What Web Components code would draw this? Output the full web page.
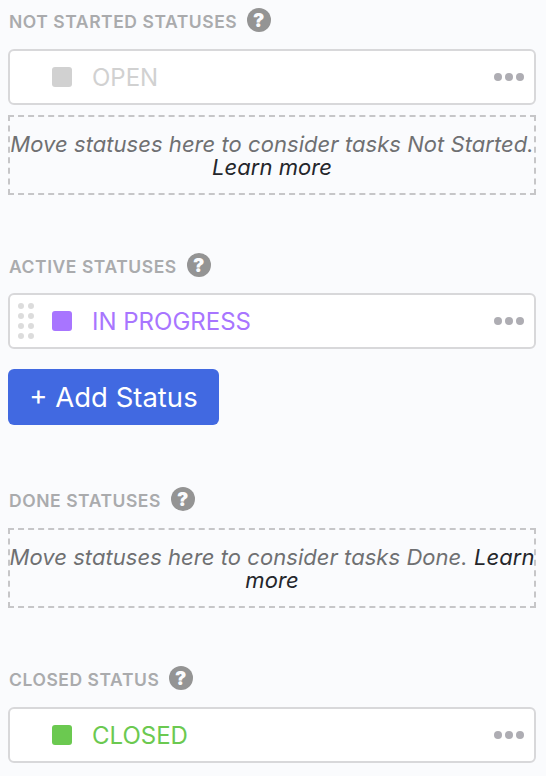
<!DOCTYPE html>
<html>
<head>
<meta charset="utf-8">
<style>
  html, body { margin: 0; height: 776px; overflow: hidden; background: #fafbfd; }
  body { font-family: Inter, "Liberation Sans", sans-serif; padding: 0 10px 0 8px; box-sizing: border-box; }
  status-group:nth-of-type(1) { margin-top: 8px; }
  status-group:nth-of-type(2) { margin-top: 58px; --head-gap: 16px; }
  status-group:nth-of-type(3) { margin-top: 62px; }
  status-group:nth-of-type(4) { margin-top: 58px; }
</style>
</head>
<body>
<template id="group-tpl">
  <style>
    :host { display: block; }
    .head { display: flex; align-items: center; gap: 10px; height: 24px; margin-bottom: var(--head-gap, 17px); padding-left: 1px;
      font-size: 17.5px; font-weight: 600; letter-spacing: 0.55px; color: #aaabad; }
    .title { padding-top: 2px; }
    svg { width: 24px; height: 24px; flex: none; }
    .body { display: flex; flex-direction: column; gap: 10px; }
  </style>
  <div class="head">
    <span class="title"></span>
    <svg viewBox="0 0 24 24"><circle cx="12" cy="12" r="12" fill="#949494"/><text x="12" y="18.5" text-anchor="middle" font-family="Inter, sans-serif" font-size="19" font-weight="900" fill="#fafbfd">?</text></svg>
  </div>
  <div class="body"><slot></slot></div>
</template>

<template id="row-tpl">
  <style>
    :host { display: flex; align-items: center; height: 56px; box-sizing: border-box; background: #fff;
      border: 2px solid #d8d8da; border-radius: 6px; padding-left: 8px; padding-right: 10px; }
    .grip { width: 16px; height: 38px; display: grid; grid-template-columns: 6px 6px; grid-auto-rows: 6px; gap: 4px; align-content: center; visibility: hidden; }
    :host([drag]) .grip { visibility: visible; }
    .grip i { background: #dcdcdc; border-radius: 50%; }
    .swatch { width: 20px; height: 20px; border-radius: 3px; margin-left: 18px; background: var(--c); flex: none; }
    .name { margin-left: 20px; padding-top: 1px; font-size: 24px; color: var(--c); flex: 1; }
    .more { display: flex; gap: 3px; }
    .more i { width: 8px; height: 8px; border-radius: 50%; background: #aeadb3; }
  </style>
  <div class="grip"><i></i><i></i><i></i><i></i><i></i><i></i><i></i><i></i></div>
  <div class="swatch"></div>
  <div class="name"><slot></slot></div>
  <div class="more"><i></i><i></i><i></i></div>
</template>

<template id="drop-tpl">
  <style>
    :host { display: block; height: 80px; box-sizing: border-box; border: 2px dashed #c6c6c8; padding-top: 16px;
      text-align: center; font-size: 22px; line-height: 23px; font-style: italic; color: #6f7072; letter-spacing: 0.05px; }
    .text { margin: 0 -3px; }
    ::slotted(a) { color: #24262b; }
  </style>
  <div class="text"><slot></slot></div>
</template>

<template id="btn-tpl">
  <style>
    :host { display: inline-flex; align-items: center; justify-content: center; align-self: flex-start; width: 211px; height: 56px; margin-top: 10px;
      background: #4169e1; color: #fff; border-radius: 6px; font-size: 27.5px; }
  </style>
  <slot></slot>
</template>

<status-group title-text="NOT STARTED STATUSES">
  <status-row color="#d1d1d1">OPEN</status-row>
  <drop-zone>Move statuses here to consider tasks Not Started. <a>Learn more</a></drop-zone>
</status-group>
<status-group title-text="ACTIVE STATUSES">
  <status-row color="#a875ff" drag>IN PROGRESS</status-row>
  <add-button>+ Add Status</add-button>
</status-group>
<status-group title-text="DONE STATUSES">
  <drop-zone>Move statuses here to consider tasks Done. <a>Learn more</a></drop-zone>
</status-group>
<status-group title-text="CLOSED STATUS">
  <status-row color="#6bc950">CLOSED</status-row>
</status-group>

<script>
function shadowFrom(el, id) {
  el.attachShadow({ mode: 'open' });
  el.shadowRoot.appendChild(document.getElementById(id).content.cloneNode(true));
}

class StatusGroup extends HTMLElement {
  constructor() { super(); shadowFrom(this, 'group-tpl'); }
  connectedCallback() {
    this.shadowRoot.querySelector('.title').textContent = this.getAttribute('title-text');
  }
}
class StatusRow extends HTMLElement {
  constructor() { super(); shadowFrom(this, 'row-tpl'); }
  connectedCallback() { this.style.setProperty('--c', this.getAttribute('color')); }
}
class DropZone extends HTMLElement {
  constructor() { super(); shadowFrom(this, 'drop-tpl'); }
}
class AddButton extends HTMLElement {
  constructor() { super(); shadowFrom(this, 'btn-tpl'); }
}
customElements.define('status-group', StatusGroup);
customElements.define('status-row', StatusRow);
customElements.define('drop-zone', DropZone);
customElements.define('add-button', AddButton);
</script>
</body>
</html>
